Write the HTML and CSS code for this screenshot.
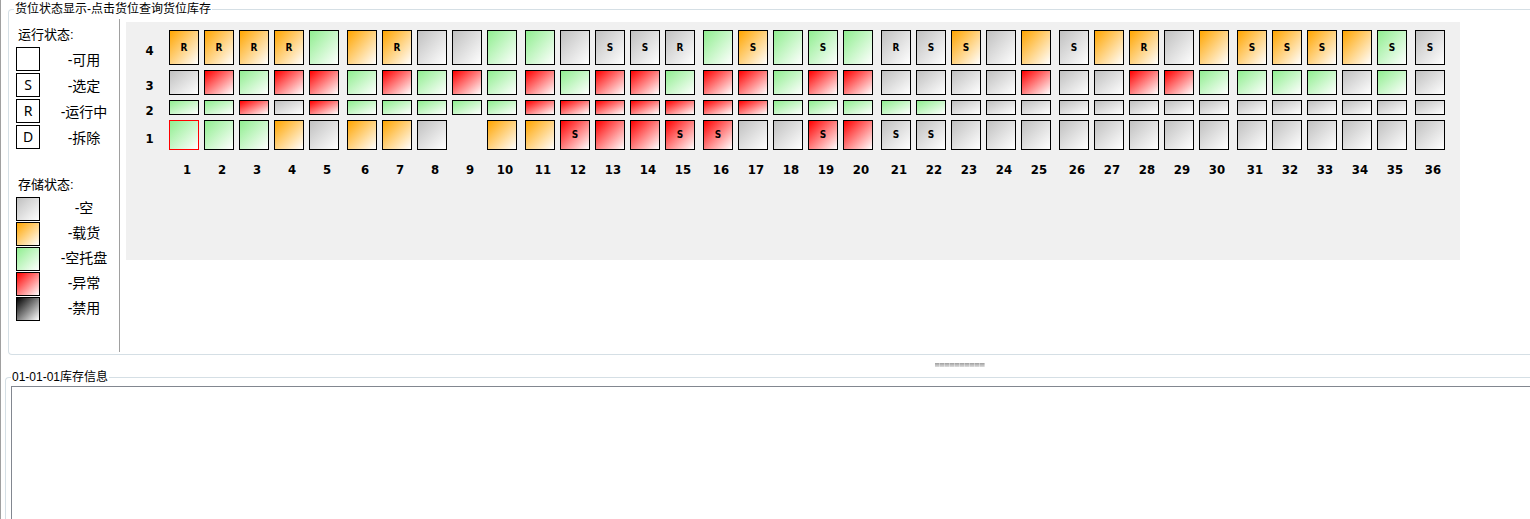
FILE: index.html
```html
<!DOCTYPE html>
<html lang="zh-CN">
<head>
<meta charset="utf-8">
<title>货位状态显示</title>
<link rel="stylesheet" href="styles.css">
</head>
<body>
<main class="window">
  <fieldset class="group group-status">
    <legend>货位状态显示-点击货位查询货位库存</legend>
    <div class="status-body">
      <aside class="keys">
        <h2 class="key-title">运行状态:</h2>
        <ul class="key-list run-list">
          <li><span class="swatch"></span><span class="key-name">-可用</span></li>
          <li><span class="swatch">S</span><span class="key-name">-选定</span></li>
          <li><span class="swatch">R</span><span class="key-name">-运行中</span></li>
          <li><span class="swatch">D</span><span class="key-name">-拆除</span></li>
        </ul>
        <h2 class="key-title">存储状态:</h2>
        <ul class="key-list store-list">
          <li><span class="swatch empty"></span><span class="key-name">-空</span></li>
          <li><span class="swatch loaded"></span><span class="key-name">-载货</span></li>
          <li><span class="swatch pallet"></span><span class="key-name">-空托盘</span></li>
          <li><span class="swatch fault"></span><span class="key-name">-异常</span></li>
          <li><span class="swatch disabled"></span><span class="key-name">-禁用</span></li>
        </ul>
      </aside>
      <section class="rack-panel">
        <div class="levels">
          <span>4</span><span>3</span><span>2</span><span>1</span>
        </div>
        <div class="rack" id="rack"></div>
      </section>
    </div>
  </fieldset>
  <div class="splitter"><span class="grip"></span></div>
  <fieldset class="group group-stock">
    <legend>01-01-01库存信息</legend>
    <div class="stock-list"></div>
  </fieldset>
</main>
<script src="rack.js"></script>
</body>
</html>
```

FILE: styles.css
```css
* {
  box-sizing: border-box;
}

body {
  margin: 0;
  background: #fff;
  color: #000;
  font: 12px/18px "Liberation Sans", "Noto Sans CJK SC", sans-serif;
  overflow: hidden;
}

.window {
  display: flex;
  flex-direction: column;
  height: 100vh;
  border-left: 1px solid #a0a0a0;
}

.group {
  min-width: 0;
  margin: 0;
  padding: 0;
  border: 1px solid #d5dfe5;
  border-right: 0;
  border-radius: 4px 0 0 4px;
}

.group legend {
  padding: 0 1px;
}

.group-status {
  flex: none;
  margin-left: 7px;
}

.group-status legend {
  margin-left: 5px;
}

.status-body {
  display: flex;
  align-items: flex-start;
  padding: 1px 0 2px;
}

.keys {
  flex: none;
  width: 111px;
  padding: 7px 7px 31px;
  border-right: 1px solid #a0a0a0;
}

.key-title {
  margin: 0 0 4px;
  padding-left: 2px;
  font-size: 13px;
  font-weight: 400;
  line-height: 17px;
}

.key-list {
  display: grid;
  margin: 0;
  padding: 0;
  list-style: none;
}

.run-list {
  gap: 2px;
  margin-bottom: 27px;
}

.store-list {
  gap: 1px;
}

.key-list li {
  display: flex;
}

.swatch {
  width: 24px;
  height: 24px;
  border: 1px solid #000;
  font: 14px/22px "Noto Sans", sans-serif;
  text-align: center;
}

.key-name {
  flex: 1;
  padding-left: 16px;
  font-size: 14px;
  line-height: 22px;
  text-align: center;
}

.run-list .key-name {
  padding-top: 3px;
  line-height: 21px;
}

.rack-panel {
  display: flex;
  min-height: 238px;
  margin: 3px 0 0 6px;
  padding: 8px 15px 0 0;
  background: #f0f0f0;
}

.levels,
.bay-column {
  display: grid;
  grid-template-rows: 35px 25px 15px 30px 28px;
  gap: 5px;
}

.levels,
.column-number {
  font: bold 13px/15px "DejaVu Sans Condensed", "DejaVu Sans", sans-serif;
  text-align: center;
}

.levels {
  width: 43px;
  padding: 3px 0 0 4px;
  align-items: center;
  align-content: start;
}

.rack {
  display: flex;
  gap: 8px;
}

.bay {
  display: flex;
  gap: 5px;
}

.bay-column {
  width: 30px;
  align-content: start;
}

.column-number {
  align-self: center;
  padding-left: 6px;
  white-space: nowrap;
}

.cell {
  padding: 0;
  border: 1px solid #000;
  border-radius: 0;
  font: bold 10px/12px "DejaVu Sans Condensed", "DejaVu Sans", sans-serif;
  color: #000;
}

.cell.selected {
  border-color: #f00;
}

.empty {
  background: linear-gradient(to bottom right, #c0c0c0, #fff);
}

.loaded {
  background: linear-gradient(to bottom right, #ffa500, #fff);
}

.pallet {
  background: linear-gradient(to bottom right, #90ee90, #fff);
}

.fault {
  background: linear-gradient(to bottom right, #f00, #fff);
}

.disabled {
  background: linear-gradient(to bottom right, #000, #fff);
}

.splitter {
  display: grid;
  flex: none;
  grid-template-columns: 11fr 7fr;
  height: 13px;
  padding-top: 8px;
}

.grip {
  grid-column: 2;
  width: 50px;
  height: 4px;
  background:
    repeating-linear-gradient(to right, transparent 0 4px, #ffffff66 4px 5px),
    linear-gradient(#a0a0a0, #dcdcdc);
}

.group-stock {
  flex: 1;
  margin-left: 4px;
  border-bottom: 0;
  border-radius: 4px 0 0 0;
}

.group-stock legend {
  margin-left: 5px;
}

.stock-list {
  height: 100%;
  margin-left: 5px;
  border: 1px solid #828790;
  border-right: 0;
  border-bottom: 0;
}
```

FILE: rack.js
```js
// One entry per column, level by level: storage state, then an optional run state.
const levels = [
  "oR oR oR oR p o oR e e p p e eS eS eR p oS p pS p eR eS oS e o eS o oR e o oS oS oS o pS eS",
  "e f p f f p f p f p f p f f p f f p f f e e e e f e e f f p p p p e p e",
  "p p f e f p p p p p f f f f f f f p p p p p e e e e e e e e e e e e e e",
  "p p p o e o o e - o o fS f f fS fS e e fS f eS eS e e e e e e e e e e e e e e"
].map(row => row.split(" "));

const states = { e: "empty", o: "loaded", p: "pallet", f: "fault" };
const rack = document.getElementById("rack");
let bay;

for (let col = 0; col < levels[0].length; col++) {
  if (col % 5 === 0) {
    bay = document.createElement("div");
    bay.className = "bay";
    rack.append(bay);
  }
  const column = document.createElement("div");
  column.className = "bay-column";
  levels.forEach((row, i) => {
    const code = row[col];
    if (code === "-") {
      column.append(document.createElement("span"));
      return;
    }
    const cell = document.createElement("button");
    cell.type = "button";
    cell.className = "cell " + states[code[0]];
    cell.textContent = code.slice(1);
    if (col === 0 && i === 3) cell.classList.add("selected");
    column.append(cell);
  });
  const number = document.createElement("span");
  number.className = "column-number";
  number.textContent = col + 1;
  column.append(number);
  bay.append(column);
}
```
